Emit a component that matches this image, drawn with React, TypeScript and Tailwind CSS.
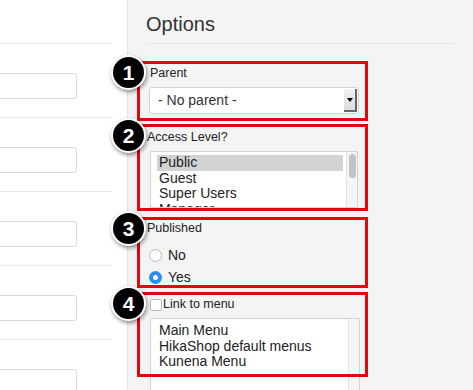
import type { ReactNode } from "react";

// numbered callout badge
function Badge({ n }: { n: number }) {
  return (
    <div className="absolute -left-[26px] -top-[6px] z-20 w-[35px] h-[35px] rounded-full bg-black border-2 border-white shadow-[1px_2px_4px_rgba(0,0,0,0.45)] flex items-center justify-center">
      <span className="text-white text-[21px] font-bold leading-none">{n}</span>
    </div>
  );
}

// red annotation frame drawn on top of the field
function Frame({ n, className, children }: { n: number; className?: string; children: ReactNode }) {
  return (
    <div className={"relative ml-[9px] w-[231px] " + (className ?? "")}>
      <div className="absolute inset-0 z-10 border-[3px] border-[#e3070d] pointer-events-none" />
      <Badge n={n} />
      {children}
    </div>
  );
}

function Scrollbar({ thumb }: { thumb?: boolean }) {
  return (
    <div className="w-[11px] shrink-0 bg-[#f5f5f5] border-l border-[#e2e2e2] pt-[2px] flex justify-center">
      {thumb && <div className="w-[7px] h-[24px] rounded-full bg-[#c3c3c3]" />}
    </div>
  );
}

export default function App() {
  const leftRows = [0, 1, 2, 3, 4];

  return (
    <div className="w-[473px] h-[390px] overflow-hidden flex bg-[#f4f4f4] text-[#222] font-['Liberation_Sans',Arial,sans-serif]">
      {/* Left form column */}
      <div className="w-[128px] shrink-0 bg-white border-r border-[#e4e4e4]">
        <div className="w-[112px]">
          <div className="h-[44px] border-b border-[#e8e8e8]" />
          {leftRows.map((i) => (
            <div key={i} className="h-[74px] pt-[29px] border-b border-[#e8e8e8]">
              <div className="-ml-[8px] w-[85px] h-[26px] bg-white border border-[#d9d9d9] rounded-[3px]" />
            </div>
          ))}
        </div>
      </div>

      {/* Options column */}
      <div className="flex-1 flex flex-col">
        <div className="ml-[18px] mr-[18px] pt-[13px] h-[44px] border-b border-[#e6e6e6]">
          <h2 className="text-[20px] leading-[23px] text-[#333]">Options</h2>
        </div>

        <div className="pt-[17px] flex flex-col">
          {/* 1 Parent */}
          <Frame n={1} className="h-[60px]">
            <div className="pl-[13px] pt-[5px] text-[12.5px] leading-[15px]">Parent</div>
            <div className="ml-[12px] mt-[6px] w-[210px] h-[27px] bg-white border border-[#d3d3d3] rounded-[3px] flex items-center">
              <span className="flex-1 pl-[8px] text-[14px] text-[#333]">- No parent -</span>
              <div className="w-[13px] h-[23px] mr-[1px] bg-gradient-to-b from-[#f2f2f2] to-[#dcdcdc] border-r-2 border-b-2 border-[#666] flex items-center justify-center">
                <div className="w-0 h-0 border-l-[3px] border-r-[3px] border-t-[4px] border-l-transparent border-r-transparent border-t-black" />
              </div>
            </div>
          </Frame>

          {/* 2 Access level */}
          <Frame n={2} className="h-[87px] mt-[3px]">
            <div className="pl-[10px] pt-[6px] text-[12.5px] leading-[15px]">Access Level?</div>
            <div className="ml-[13px] mt-[6px] w-[208px] h-[57px] bg-white border border-[#d3d3d3] flex overflow-hidden">
              <div className="flex-1 pt-[3px] pl-[6px] pr-[3px] text-[14px] leading-[15.5px] text-[#222]">
                <div className="bg-[#d3d3d3] pl-[2px]">Public</div>
                <div className="pl-[2px]">Guest</div>
                <div className="pl-[2px]">Super Users</div>
                <div className="pl-[2px]">Manager</div>
              </div>
              <Scrollbar thumb />
            </div>
          </Frame>

          {/* 3 Published */}
          <Frame n={3} className="h-[71px] mt-[6px]">
            <div className="pl-[10px] pt-[4px] text-[12.5px] leading-[15px]">Published</div>
            <div className="pl-[12px] pt-[12px] flex flex-col gap-[8px] text-[14px] leading-[14px]">
              <label className="flex items-center gap-[6px]">
                <span className="w-[13px] h-[13px] rounded-full bg-white border border-[#b9b9b9]" />
                No
              </label>
              <label className="flex items-center gap-[6px]">
                <span className="w-[13px] h-[13px] rounded-full bg-[#2f8af5] flex items-center justify-center">
                  <span className="w-[5px] h-[5px] rounded-full bg-white" />
                </span>
                Yes
              </label>
            </div>
          </Frame>

          {/* 4 Link to menu */}
          <Frame n={4} className="h-[85px] mt-[4px]">
            <div className="pl-[13px] pt-[6px] flex items-center text-[12.5px] leading-[13px]">
              <span className="w-[12px] h-[12px] bg-white border border-[#b9b9b9] rounded-[2px]" />
              <span className="ml-[1px]">Link to menu</span>
            </div>
            <div className="ml-[13px] mt-[7px] w-[210px] h-[80px] bg-white border border-[#d3d3d3] flex">
              <div className="flex-1 pt-[4px] pl-[8px] text-[14px] leading-[15.5px] text-[#222]">
                <div>Main Menu</div>
                <div>HikaShop default menus</div>
                <div>Kunena Menu</div>
              </div>
              <Scrollbar />
            </div>
          </Frame>
        </div>
      </div>
    </div>
  );
}
